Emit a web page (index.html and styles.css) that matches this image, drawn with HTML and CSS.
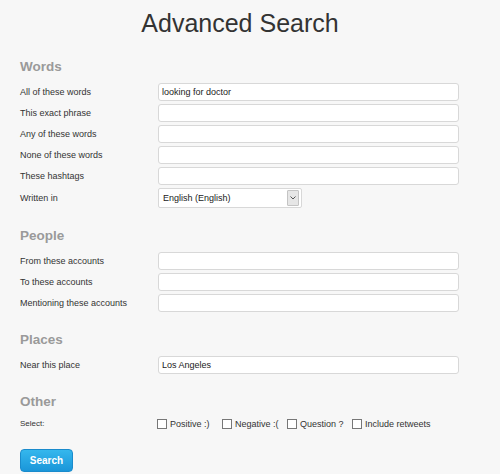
FILE: index.html
```html
<!DOCTYPE html>
<html lang="en">
<head>
<meta charset="utf-8">
<title>Advanced Search</title>
<link rel="stylesheet" href="styles.css">
</head>
<body>
<div class="page">
  <h1 class="title">Advanced Search</h1>

  <section class="group">
    <h2 class="group-title">Words</h2>
    <div class="fields">
      <label class="field-label">All of these words</label>
      <input class="text" type="text" value="looking for doctor">
      <label class="field-label">This exact phrase</label>
      <input class="text" type="text">
      <label class="field-label">Any of these words</label>
      <input class="text" type="text">
      <label class="field-label">None of these words</label>
      <input class="text" type="text">
      <label class="field-label">These hashtags</label>
      <input class="text" type="text">
      <span class="field-label">Written in</span>
      <div class="select">
        <span class="select-value">English (English)</span>
        <span class="select-btn">
          <svg width="6" height="4" viewBox="0 0 6 4"><path d="M0.5 0.5 L3 3 L5.5 0.5" fill="none" stroke="#555" stroke-width="1"/></svg>
        </span>
      </div>
    </div>
  </section>

  <section class="group">
    <h2 class="group-title">People</h2>
    <div class="fields">
      <label class="field-label">From these accounts</label>
      <input class="text" type="text">
      <label class="field-label">To these accounts</label>
      <input class="text" type="text">
      <label class="field-label">Mentioning these accounts</label>
      <input class="text" type="text">
    </div>
  </section>

  <section class="group">
    <h2 class="group-title">Places</h2>
    <div class="fields">
      <label class="field-label">Near this place</label>
      <input class="text" type="text" value="Los Angeles">
    </div>
  </section>

  <section class="group">
    <h2 class="group-title">Other</h2>
    <div class="fields fields-other">
      <span class="field-label small">Select:</span>
      <div class="options">
        <label class="option"><input class="check" type="checkbox">Positive :)</label>
        <label class="option"><input class="check" type="checkbox">Negative :(</label>
        <label class="option"><input class="check" type="checkbox">Question ?</label>
        <label class="option option-last"><input class="check" type="checkbox">Include retweets</label>
      </div>
    </div>
  </section>

  <button class="search-btn" type="button">Search</button>
</div>
</body>
</html>
```

FILE: styles.css
```css
html, body {
  margin: 0;
  padding: 0;
}

body {
  background: #f7f7f7;
  font-family: "Liberation Sans", Arial, sans-serif;
  color: #333;
}

.page {
  width: 440px;
  padding: 0 0 0 20px;
}

.title {
  margin: 0;
  padding: 8px 0 1px;
  font-size: 25px;
  line-height: 30px;
  font-weight: normal;
  text-align: center;
  color: #333;
}

.group {
  margin-top: 20px;
}

.group-title {
  margin: 0 0 8px;
  font-size: 13.5px;
  line-height: 16px;
  font-weight: bold;
  color: #9a9a9a;
}

.fields {
  display: grid;
  grid-template-columns: 138px 301px;
  row-gap: 3px;
  align-items: center;
}

.field-label {
  font-size: 9px;
  line-height: 12px;
  color: #333;
}

.field-label.small {
  font-size: 8px;
}

.text {
  box-sizing: border-box;
  width: 301px;
  height: 18px;
  margin: 0;
  padding: 0 3px;
  border: 1px solid #d8d8d8;
  border-radius: 3px;
  background: #fff;
  font-family: "Liberation Sans", Arial, sans-serif;
  font-size: 9px;
  color: #222;
  outline: none;
}

.select {
  justify-self: start;
  box-sizing: border-box;
  width: 144px;
  height: 20px;
  display: flex;
  align-items: center;
  padding: 0 2px 0 4px;
  border: 1px solid #d8d8d8;
  border-radius: 2px;
  background: #fff;
  font-size: 9px;
  color: #222;
}

.select-value {
  flex: 1;
}

.select-btn {
  box-sizing: border-box;
  width: 12px;
  height: 16px;
  display: flex;
  align-items: center;
  justify-content: center;
  border: 1px solid #c4c4c4;
  border-radius: 1px;
  background: #e6e6e6;
}

.fields-other {
  height: 12px;
}

.options {
  display: flex;
  align-items: center;
  margin-left: -1px;
}

.option {
  width: 65px;
  display: flex;
  align-items: center;
  font-size: 9px;
  line-height: 12px;
  color: #333;
  white-space: nowrap;
}

.option-last {
  width: auto;
}

.check {
  -webkit-appearance: none;
  appearance: none;
  box-sizing: border-box;
  width: 10px;
  height: 10px;
  margin: 0 3px 0 0;
  border: 1px solid #777;
  background: #fff;
}

.search-btn {
  display: block;
  box-sizing: border-box;
  width: 53px;
  height: 23px;
  margin: 19px 0 0;
  padding: 0;
  border: 1px solid #1a8bcc;
  border-radius: 4px;
  background: linear-gradient(#35b7ed, #1a96d9);
  color: #fff;
  font-family: "Liberation Sans", Arial, sans-serif;
  font-size: 10px;
  font-weight: bold;
}
```
